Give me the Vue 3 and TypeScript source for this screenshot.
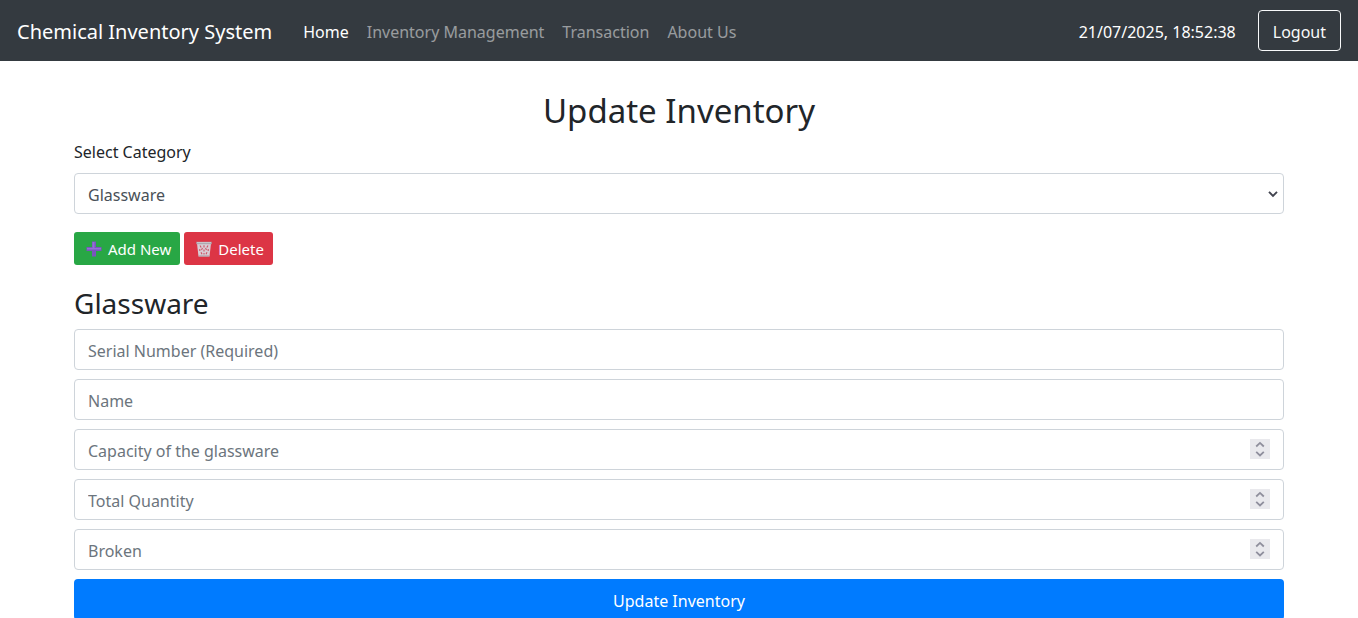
<script setup lang="ts">
import { ref } from 'vue'

interface NavLink {
  label: string
  active: boolean
}

interface Field {
  id: string
  label: string
  type: 'text' | 'number'
}

const links: NavLink[] = [
  { label: 'Home', active: true },
  { label: 'Inventory Management', active: false },
  { label: 'Transaction', active: false },
  { label: 'About Us', active: false },
]

const fields: Field[] = [
  { id: 'serial', label: 'Serial Number (Required)', type: 'text' },
  { id: 'name', label: 'Name', type: 'text' },
  { id: 'capacity', label: 'Capacity of the glassware', type: 'number' },
  { id: 'total', label: 'Total Quantity', type: 'number' },
  { id: 'broken', label: 'Broken', type: 'number' },
]

const category = ref('Glassware')
const values = ref<Record<string, string | number>>({})

function step(id: string, delta: number) {
  values.value[id] = Number(values.value[id] || 0) + delta
}
</script>

<template>
  <div class="page">
    <header class="navbar">
      <a class="brand" href="#">Chemical Inventory System</a>
      <nav class="links">
        <a
          v-for="link in links"
          :key="link.label"
          href="#"
          class="link"
          :class="{ active: link.active }"
        >{{ link.label }}</a>
      </nav>
      <span class="clock">21/07/2025, 18:52:38</span>
      <button type="button" class="logout">Logout</button>
    </header>

    <main class="container">
      <h2 class="title">Update Inventory</h2>
      <label class="label" for="category">Select Category</label>
      <div class="select-wrap">
        <select id="category" v-model="category" class="control">
          <option>Glassware</option>
        </select>
        <svg class="chevron" viewBox="0 0 10 8" aria-hidden="true">
          <path d="M1 1.8 5 5.8 9 1.8" fill="none" stroke="#42444f" stroke-width="1.9" />
        </svg>
      </div>

      <div class="actions">
        <button type="button" class="btn add">
          <svg class="icon" viewBox="0 0 16 16" aria-hidden="true">
            <path d="M6 .5h4V6h5.5v4H10v5.5H6V10H.5V6H6z" fill="#7a55bd" />
            <path d="M6.5 1h2v6H15v1.6H1V7h5.5z" fill="#946fd6" />
          </svg>
          Add New
        </button>
        <button type="button" class="btn delete">
          <svg class="icon" viewBox="0 0 16 16" aria-hidden="true">
            <path d="M1 2.5h14l-1.5 13h-11z" fill="#d9ccd4" />
            <path d="m4 4.5 1.2 2M8 4.3v2.2M12 4.5l-1.2 2M6.5 7l-1 2M9.5 7l1 2M3.8 8v2M12.2 8v2M8 8.5v2M5 11.2l1 2M11 11.2l-1 2M8 12v1.5" fill="none" stroke="#cc5466" stroke-width="1.1" />
            <path d="M.3.8h15.4v2.4H.3z" fill="#aaa5ac" />
            <path d="M1 1.3h14v.8H1z" fill="#d5d1d6" />
            <path d="M2.7 14.4h10.6v1.1H2.7z" fill="#aaa0a9" />
          </svg>
          Delete
        </button>
      </div>

      <h3 class="subtitle">{{ category }}</h3>
      <form class="form" @submit.prevent>
        <div v-for="field in fields" :key="field.id" class="field">
          <input
            :id="field.id"
            v-model="values[field.id]"
            class="control"
            :type="field.type"
            :placeholder="field.label"
            :aria-label="field.label"
          />
          <div v-if="field.type === 'number'" class="spinner">
            <button type="button" :aria-label="'Increase ' + field.label" @click="step(field.id, 1)">
              <svg viewBox="0 0 10 10" aria-hidden="true">
                <path d="M1.2 7.5 5 3.9 8.8 7.5" fill="none" stroke="#8f8f9d" stroke-width="1.8" />
              </svg>
            </button>
            <button type="button" :aria-label="'Decrease ' + field.label" @click="step(field.id, -1)">
              <svg viewBox="0 0 10 10" aria-hidden="true">
                <path d="M1.2 2.8 5 6.4 8.8 2.8" fill="none" stroke="#8f8f9d" stroke-width="1.8" />
              </svg>
            </button>
          </div>
        </div>
        <button type="submit" class="submit">Update Inventory</button>
      </form>
    </main>
  </div>
</template>

<style>
html {
  overflow: hidden;
}

body {
  margin: 0;
  background: #fff;
}
</style>

<style scoped>
.page,
.page * {
  box-sizing: border-box;
}

.page {
  font-family: "Noto Sans", "Open Sans", sans-serif;
  font-size: 16px;
  line-height: 26px;
  color: #212529;
}

button,
input,
select {
  margin: 0;
  font: inherit;
}

.navbar {
  display: flex;
  align-items: center;
  padding: 10px 17px;
  background: #343a40;
}

.brand {
  margin-right: 22px;
  padding-top: 2px;
  font-size: 20px;
  color: #fff;
  text-decoration: none;
}

.links {
  display: flex;
  flex: 1;
}

.link {
  padding: 2px 9px 0;
  color: rgba(255, 255, 255, 0.5);
  text-decoration: none;
}

.link.active {
  color: #fff;
}

.clock {
  margin-right: 22px;
  padding-top: 2px;
  color: #fff;
}

.logout {
  height: 41px;
  padding: 2px 14px 0;
  border: 1px solid #f8f9fa;
  border-radius: 4px;
  background: transparent;
  color: #f8f9fa;
}

.container {
  max-width: 1246px;
  margin: 0 auto;
  padding: 29px 18px 0;
}

.title {
  margin: 0 0 7px;
  font-size: 33px;
  line-height: 42px;
  font-weight: 400;
  text-align: center;
}

.label {
  display: block;
  margin-bottom: 8px;
}

.select-wrap,
.field {
  position: relative;
}

.control {
  display: block;
  width: 100%;
  height: 41px;
  padding: 2px 13px 0;
  border: 1px solid #ced4da;
  border-radius: 4px;
  background: #fff;
  color: #495057;
  appearance: none;
}

.control::placeholder {
  color: #6c757d;
  opacity: 1;
}

.control[type="number"] {
  appearance: textfield;
}

.chevron {
  position: absolute;
  top: 17px;
  right: 6px;
  width: 10px;
  height: 8px;
  pointer-events: none;
}

.actions {
  display: flex;
  gap: 4px;
  margin: 18px 0 20px;
}

.btn {
  display: flex;
  align-items: center;
  gap: 6px;
  height: 33px;
  padding: 1px 9px 0 12px;
  border: 0;
  border-radius: 3px;
  font-size: 15px;
  color: #fff;
}

.add {
  background: #28a745;
}

.delete {
  background: #dc3545;
}

.icon {
  width: 16px;
  height: 16px;
}

.subtitle {
  margin: 0 0 8px;
  font-size: 28px;
  line-height: 36px;
  font-weight: 400;
}

.form {
  display: flex;
  flex-direction: column;
  gap: 9px;
}

.spinner {
  position: absolute;
  top: 10px;
  right: 14px;
  width: 20px;
  height: 20px;
  background: #e9e9ed;
}

.spinner button {
  display: flex;
  justify-content: center;
  width: 100%;
  height: 10px;
  padding: 0;
  border: 0;
  background: transparent;
}

.spinner svg {
  width: 10px;
  height: 10px;
}

.submit {
  height: 41px;
  padding: 2px 13px 0;
  border: 0;
  border-radius: 4px;
  background: #007bff;
  color: #fff;
}
</style>
